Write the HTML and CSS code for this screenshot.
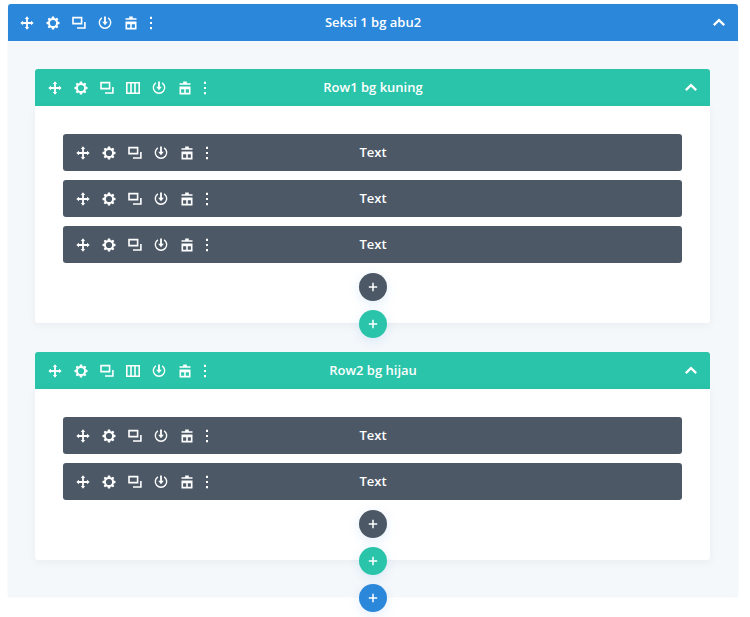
FILE: index.html
```html
<!DOCTYPE html>
<html lang="id">
<head>
<meta charset="utf-8">
<title>Builder</title>
<link rel="stylesheet" href="styles.css">
</head>
<body>
<svg class="defs" width="0" height="0" aria-hidden="true">
  <symbol id="i-move" viewBox="0 0 14 14"><path d="M7 0.3 9.2 3H7.9V6.1H11V4.8L13.7 7 11 9.2V7.9H7.9V11H9.2L7 13.7 4.8 11H6.1V7.9H3V9.2L0.3 7 3 4.8V6.1H6.1V3H4.8Z" fill="currentColor"/></symbol>
  <symbol id="i-gear" viewBox="0 0 14 14"><path fill-rule="evenodd" d="M5.9 0.5H8.1L8.5 2.2 9.5 2.6 11 1.7 12.3 3 11.4 4.5 11.8 5.5 13.5 5.9V8.1L11.8 8.5 11.4 9.5 12.3 11 11 12.3 9.5 11.4 8.5 11.8 8.1 13.5H5.9L5.5 11.8 4.5 11.4 3 12.3 1.7 11 2.6 9.5 2.2 8.5 0.5 8.1V5.9L2.2 5.5 2.6 4.5 1.7 3 3 1.7 4.5 2.6 5.5 2.2ZM7 3.9A3.1 3.1 0 1 0 7 10.1 3.1 3.1 0 1 0 7 3.9Z" fill="currentColor"/></symbol>
  <symbol id="i-dup" viewBox="0 0 14 14"><path d="M1 1.6H9.6V7.6H1ZM12.9 6V12H5" fill="none" stroke="currentColor" stroke-width="1.6"/></symbol>
  <symbol id="i-cols" viewBox="0 0 14 14"><path d="M0.8 1.8H13.2V12.2H0.8ZM5 1.8V12.2M9 1.8V12.2" fill="none" stroke="currentColor" stroke-width="1.6"/></symbol>
  <symbol id="i-save" viewBox="0 0 14 14"><path d="M3.9 1.8A5.7 5.7 0 1 0 10.1 1.8" fill="none" stroke="currentColor" stroke-width="1.4"/><path d="M6.1 0.6H7.9V5.8H9.8L7 9.2 4.2 5.8H6.1Z" fill="currentColor"/></symbol>
  <symbol id="i-trash" viewBox="0 0 14 14"><path d="M1.5 2.2H5.2V0.6H8.8V2.2H12.5V3.8H1.5ZM1.5 5.4H12.5V13.4H1.5ZM3.1 8.3V11.8H6.2V8.3ZM7.8 8.3V11.8H10.9V8.3Z" fill="currentColor" fill-rule="evenodd"/></symbol>
  <symbol id="i-dots" viewBox="0 0 14 14"><path d="M6 0.8H8V3H6ZM6 5.9H8V8.1H6ZM6 11H8V13.2H6Z" fill="currentColor"/></symbol>
  <symbol id="i-up" viewBox="0 0 14 14"><path d="M1.8 9.2 7 4.2 12.2 9.2" fill="none" stroke="currentColor" stroke-width="2.3"/></symbol>
  <symbol id="i-plus" viewBox="0 0 10 10"><path d="M5 0.8V9.2M0.8 5H9.2" fill="none" stroke="currentColor" stroke-width="1.5"/></symbol>
</svg>

<main class="section">
  <header class="bar bar-section">
    <div class="tools">
      <svg class="ic"><use href="#i-move"/></svg><svg class="ic"><use href="#i-gear"/></svg><svg class="ic"><use href="#i-dup"/></svg><svg class="ic"><use href="#i-save"/></svg><svg class="ic"><use href="#i-trash"/></svg><svg class="ic ic-dots"><use href="#i-dots"/></svg>
    </div>
    <span class="title">Seksi 1 bg abu2</span>
    <svg class="ic chev"><use href="#i-up"/></svg>
  </header>
  <div class="section-body">
    <section class="row">
      <header class="bar bar-row">
        <div class="tools">
          <svg class="ic"><use href="#i-move"/></svg><svg class="ic"><use href="#i-gear"/></svg><svg class="ic"><use href="#i-dup"/></svg><svg class="ic"><use href="#i-cols"/></svg><svg class="ic"><use href="#i-save"/></svg><svg class="ic"><use href="#i-trash"/></svg><svg class="ic ic-dots"><use href="#i-dots"/></svg>
        </div>
        <span class="title">Row1 bg kuning</span>
        <svg class="ic chev"><use href="#i-up"/></svg>
      </header>
      <div class="row-body">
        <div class="bar bar-module">
          <div class="tools"><svg class="ic"><use href="#i-move"/></svg><svg class="ic"><use href="#i-gear"/></svg><svg class="ic"><use href="#i-dup"/></svg><svg class="ic"><use href="#i-save"/></svg><svg class="ic"><use href="#i-trash"/></svg><svg class="ic ic-dots"><use href="#i-dots"/></svg></div>
          <span class="title">Text</span>
        </div>
        <div class="bar bar-module">
          <div class="tools"><svg class="ic"><use href="#i-move"/></svg><svg class="ic"><use href="#i-gear"/></svg><svg class="ic"><use href="#i-dup"/></svg><svg class="ic"><use href="#i-save"/></svg><svg class="ic"><use href="#i-trash"/></svg><svg class="ic ic-dots"><use href="#i-dots"/></svg></div>
          <span class="title">Text</span>
        </div>
        <div class="bar bar-module">
          <div class="tools"><svg class="ic"><use href="#i-move"/></svg><svg class="ic"><use href="#i-gear"/></svg><svg class="ic"><use href="#i-dup"/></svg><svg class="ic"><use href="#i-save"/></svg><svg class="ic"><use href="#i-trash"/></svg><svg class="ic ic-dots"><use href="#i-dots"/></svg></div>
          <span class="title">Text</span>
        </div>
        <button class="add add-dark"><svg class="plus"><use href="#i-plus"/></svg></button>
      </div>
      <button class="add add-green add-over"><svg class="plus"><use href="#i-plus"/></svg></button>
    </section>
    <section class="row">
      <header class="bar bar-row">
        <div class="tools">
          <svg class="ic"><use href="#i-move"/></svg><svg class="ic"><use href="#i-gear"/></svg><svg class="ic"><use href="#i-dup"/></svg><svg class="ic"><use href="#i-cols"/></svg><svg class="ic"><use href="#i-save"/></svg><svg class="ic"><use href="#i-trash"/></svg><svg class="ic ic-dots"><use href="#i-dots"/></svg>
        </div>
        <span class="title">Row2 bg hijau</span>
        <svg class="ic chev"><use href="#i-up"/></svg>
      </header>
      <div class="row-body">
        <div class="bar bar-module">
          <div class="tools"><svg class="ic"><use href="#i-move"/></svg><svg class="ic"><use href="#i-gear"/></svg><svg class="ic"><use href="#i-dup"/></svg><svg class="ic"><use href="#i-save"/></svg><svg class="ic"><use href="#i-trash"/></svg><svg class="ic ic-dots"><use href="#i-dots"/></svg></div>
          <span class="title">Text</span>
        </div>
        <div class="bar bar-module">
          <div class="tools"><svg class="ic"><use href="#i-move"/></svg><svg class="ic"><use href="#i-gear"/></svg><svg class="ic"><use href="#i-dup"/></svg><svg class="ic"><use href="#i-save"/></svg><svg class="ic"><use href="#i-trash"/></svg><svg class="ic ic-dots"><use href="#i-dots"/></svg></div>
          <span class="title">Text</span>
        </div>
        <button class="add add-dark"><svg class="plus"><use href="#i-plus"/></svg></button>
      </div>
      <button class="add add-green add-over"><svg class="plus"><use href="#i-plus"/></svg></button>
    </section>
  </div>
  <button class="add add-blue add-over"><svg class="plus"><use href="#i-plus"/></svg></button>
</main>
</body>
</html>
```
FILE: styles.css
```css
* { box-sizing: border-box; }
html, body { height: 100%; overflow: hidden; }
body {
  margin: 0;
  padding: 4px 12px 0 8px;
  background: #fff;
  font-family: "Open Sans", sans-serif;
}
.defs { position: absolute; }
.section {
  height: 593px;
  background: #f5f8fb;
  box-shadow: 0 0 1px rgba(43, 87, 135, 0.2);
  border-radius: 3px;
  display: flex;
  flex-direction: column;
}
.bar {
  height: 37px;
  flex: none;
  display: grid;
  grid-template-columns: 1fr auto 1fr;
  align-items: center;
  color: #fff;
  border-radius: 3px 3px 0 0;
  padding-left: 13px;
  padding-right: 12px;
}
.bar-section { background: #2b87da; padding-left: 12px; }
.bar-row { background: #29c4a9; }
.bar-module { background: #4c5866; border-radius: 3px; margin-bottom: 9px; }
.bar-module:nth-last-child(2) { margin-bottom: 0; }
.tools { display: flex; align-items: center; gap: 12px; }
.ic { width: 14px; height: 14px; display: block; color: #fff; }
.ic-dots { margin-left: -6px; }
.chev { justify-self: end; grid-column: 3; }
.title {
  font-size: 13px;
  font-weight: 600;
  line-height: 18px;
  margin-bottom: 2px;
  white-space: nowrap;
  text-align: center;
}
.section-body {
  padding: 28px 28px 22px 27px;
  display: flex;
  flex-direction: column;
  gap: 14px;
}
.row {
  display: flex;
  flex-direction: column;
  align-items: center;
}
.row > .bar { width: 100%; }
.row-body {
  width: 100%;
  background: #fff;
  padding: 28px 28px 22px;
  display: flex;
  flex-direction: column;
  border-radius: 0 0 3px 3px;
  box-shadow: 0 2px 8px rgba(76, 88, 102, 0.07);
}
.add {
  width: 28px;
  height: 28px;
  border: 0;
  padding: 0;
  border-radius: 50%;
  flex: none;
  display: flex;
  align-items: center;
  justify-content: center;
  color: #fff;
  position: relative;
  box-shadow: 0 3px 12px rgba(43, 135, 218, 0.14);
}
.add-dark { background: #4c5866; align-self: center; margin-top: 10px; }
.add-green { background: #29c4a9; }
.add-blue { background: #2b87da; align-self: center; }
.add-over { margin-top: -13px; }
.plus { width: 10px; height: 10px; display: block; }
```
